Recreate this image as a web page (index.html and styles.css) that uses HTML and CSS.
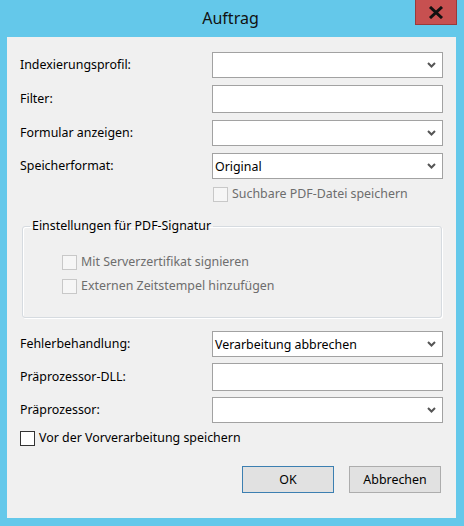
FILE: index.html
```html
<!DOCTYPE html>
<html lang="de">

<head>
    <meta charset="UTF-8">
    <meta name="viewport" content="width=device-width, initial-scale=1.0">
    <title>Auftrag</title>
    <link rel="stylesheet" href="styles.css">
</head>

<body>
    <div class="window">
        <div class="title-bar">
            <span></span>
            <div class="title">Auftrag</div>
            <button class="close-button" title="Schließen">
                <svg width="16" height="13" viewBox="0 0 16 13">
                    <path d="M2 1 L14 12 M14 1 L2 12" stroke="#111" stroke-width="3" fill="none" />
                </svg>
            </button>
        </div>

        <div class="client">
            <div class="field-row">
                <label>Indexierungsprofil:</label>
                <div class="select"><span class="select-value"></span><span class="chevron"><svg width="9" height="6" viewBox="0 0 9 6"><path d="M1 1 L4.5 4.5 L8 1" stroke="#555" stroke-width="2" fill="none" /></svg></span></div>
            </div>
            <div class="field-row">
                <label>Filter:</label>
                <div class="textbox"></div>
            </div>
            <div class="field-row">
                <label>Formular anzeigen:</label>
                <div class="select"><span class="select-value"></span><span class="chevron"><svg width="9" height="6" viewBox="0 0 9 6"><path d="M1 1 L4.5 4.5 L8 1" stroke="#555" stroke-width="2" fill="none" /></svg></span></div>
            </div>
            <div class="field-row">
                <label>Speicherformat:</label>
                <div class="select"><span class="select-value">Original</span><span class="chevron"><svg width="9" height="6" viewBox="0 0 9 6"><path d="M1 1 L4.5 4.5 L8 1" stroke="#555" stroke-width="2" fill="none" /></svg></span></div>
            </div>

            <div class="check-row indent-field disabled">
                <span class="checkbox"></span>
                <span>Suchbare PDF-Datei speichern</span>
            </div>

            <fieldset class="group">
                <legend>Einstellungen für PDF-Signatur</legend>
                <div class="check-row disabled">
                    <span class="checkbox"></span>
                    <span>Mit Serverzertifikat signieren</span>
                </div>
                <div class="check-row disabled">
                    <span class="checkbox"></span>
                    <span>Externen Zeitstempel hinzufügen</span>
                </div>
            </fieldset>

            <div class="lower">
                <div class="field-row">
                    <label>Fehlerbehandlung:</label>
                    <div class="select"><span class="select-value">Verarbeitung abbrechen</span><span class="chevron"><svg width="9" height="6" viewBox="0 0 9 6"><path d="M1 1 L4.5 4.5 L8 1" stroke="#555" stroke-width="2" fill="none" /></svg></span></div>
                </div>
                <div class="field-row">
                    <label>Präprozessor-DLL:</label>
                    <div class="textbox"></div>
                </div>
                <div class="field-row">
                    <label>Präprozessor:</label>
                    <div class="select"><span class="select-value"></span><span class="chevron"><svg width="9" height="6" viewBox="0 0 9 6"><path d="M1 1 L4.5 4.5 L8 1" stroke="#555" stroke-width="2" fill="none" /></svg></span></div>
                </div>
            </div>

            <div class="check-row indent-label">
                <span class="checkbox enabled"></span>
                <span>Vor der Vorverarbeitung speichern</span>
            </div>

            <div class="button-bar">
                <button class="dialog-button default">OK</button>
                <button class="dialog-button">Abbrechen</button>
            </div>
        </div>
    </div>
</body>

</html>
```

FILE: styles.css
```css
body {
    margin: 0;
    background-color: #64c8ea;
    font-family: 'Noto Sans', 'Liberation Sans', sans-serif;
    font-size: 12.4px;
    color: #000;
}

.window {
    width: 464px;
    height: 526px;
}

.title-bar {
    height: 37px;
    display: grid;
    grid-template-columns: 1fr auto 1fr;
}

.title {
    font-size: 16px;
    line-height: 18px;
    padding-top: 9px;
    color: #111;
    padding-right: 3px;
}

.close-button {
    justify-self: end;
    align-self: start;
    margin-right: 7px;
    width: 42px;
    height: 25px;
    padding: 0;
    background-color: #c75050;
    border: 1px solid #9a3a3a;
    border-top: none;
    display: flex;
    align-items: center;
    justify-content: center;
}

.client {
    margin: 0 8px 0 7px;
    height: 481px;
    box-sizing: border-box;
    padding-top: 15px;
    background-color: #f0f0f0;
}

.field-row {
    display: grid;
    grid-template-columns: 192px 231px;
    align-items: center;
    padding-left: 13px;
    margin-bottom: 7px;
}

.lower .field-row {
    margin-bottom: 6px;
}

.field-row label {
    line-height: 16px;
}

.select,
.textbox {
    box-sizing: border-box;
    border: 1px solid #a2a2a2;
    background-color: white;
}

.select {
    height: 26px;
    display: flex;
    align-items: center;
    justify-content: space-between;
    padding: 0 6px 0 2px;
}

.textbox {
    height: 28px;
}

.chevron {
    display: flex;
}

.check-row {
    display: flex;
    align-items: center;
    gap: 4px;
    height: 16px;
    line-height: 16px;
}

.check-row.disabled {
    color: #6d6d6d;
}

.checkbox {
    width: 13px;
    height: 13px;
    border: 1px solid #c8c8c8;
    background-color: #f6f6f6;
}

.checkbox.enabled {
    border-color: #333;
    background-color: white;
}

.indent-field {
    margin-top: 3px;
    padding-left: 206px;
}

.indent-label {
    margin-top: 7px;
    padding-left: 13px;
}

.group {
    margin: 16px 0 0 15px;
    width: 420px;
    height: 100px;
    box-sizing: border-box;
    padding: 20px 0 0 0;
    border: 1px solid #d6dbe0;
    border-radius: 3px;
    box-shadow: 1px 1px 0 #fff, inset 1px 1px 0 #fff;
}

.group legend {
    margin-left: 7px;
    padding: 0 2px;
    line-height: 16px;
}

.group .check-row {
    margin: 0 0 8px 39px;
}

.lower {
    margin-top: 13px;
}

.button-bar {
    display: flex;
    justify-content: flex-end;
    gap: 15px;
    padding-right: 15px;
    margin-top: 20px;
}

.dialog-button {
    width: 92px;
    height: 27px;
    font-family: inherit;
    font-size: 12.4px;
    color: #000;
    background-color: #e1e1e1;
    border: 1px solid #adadad;
    padding: 0;
}

.dialog-button.default {
    border-color: #3c7fb1;
}
```
